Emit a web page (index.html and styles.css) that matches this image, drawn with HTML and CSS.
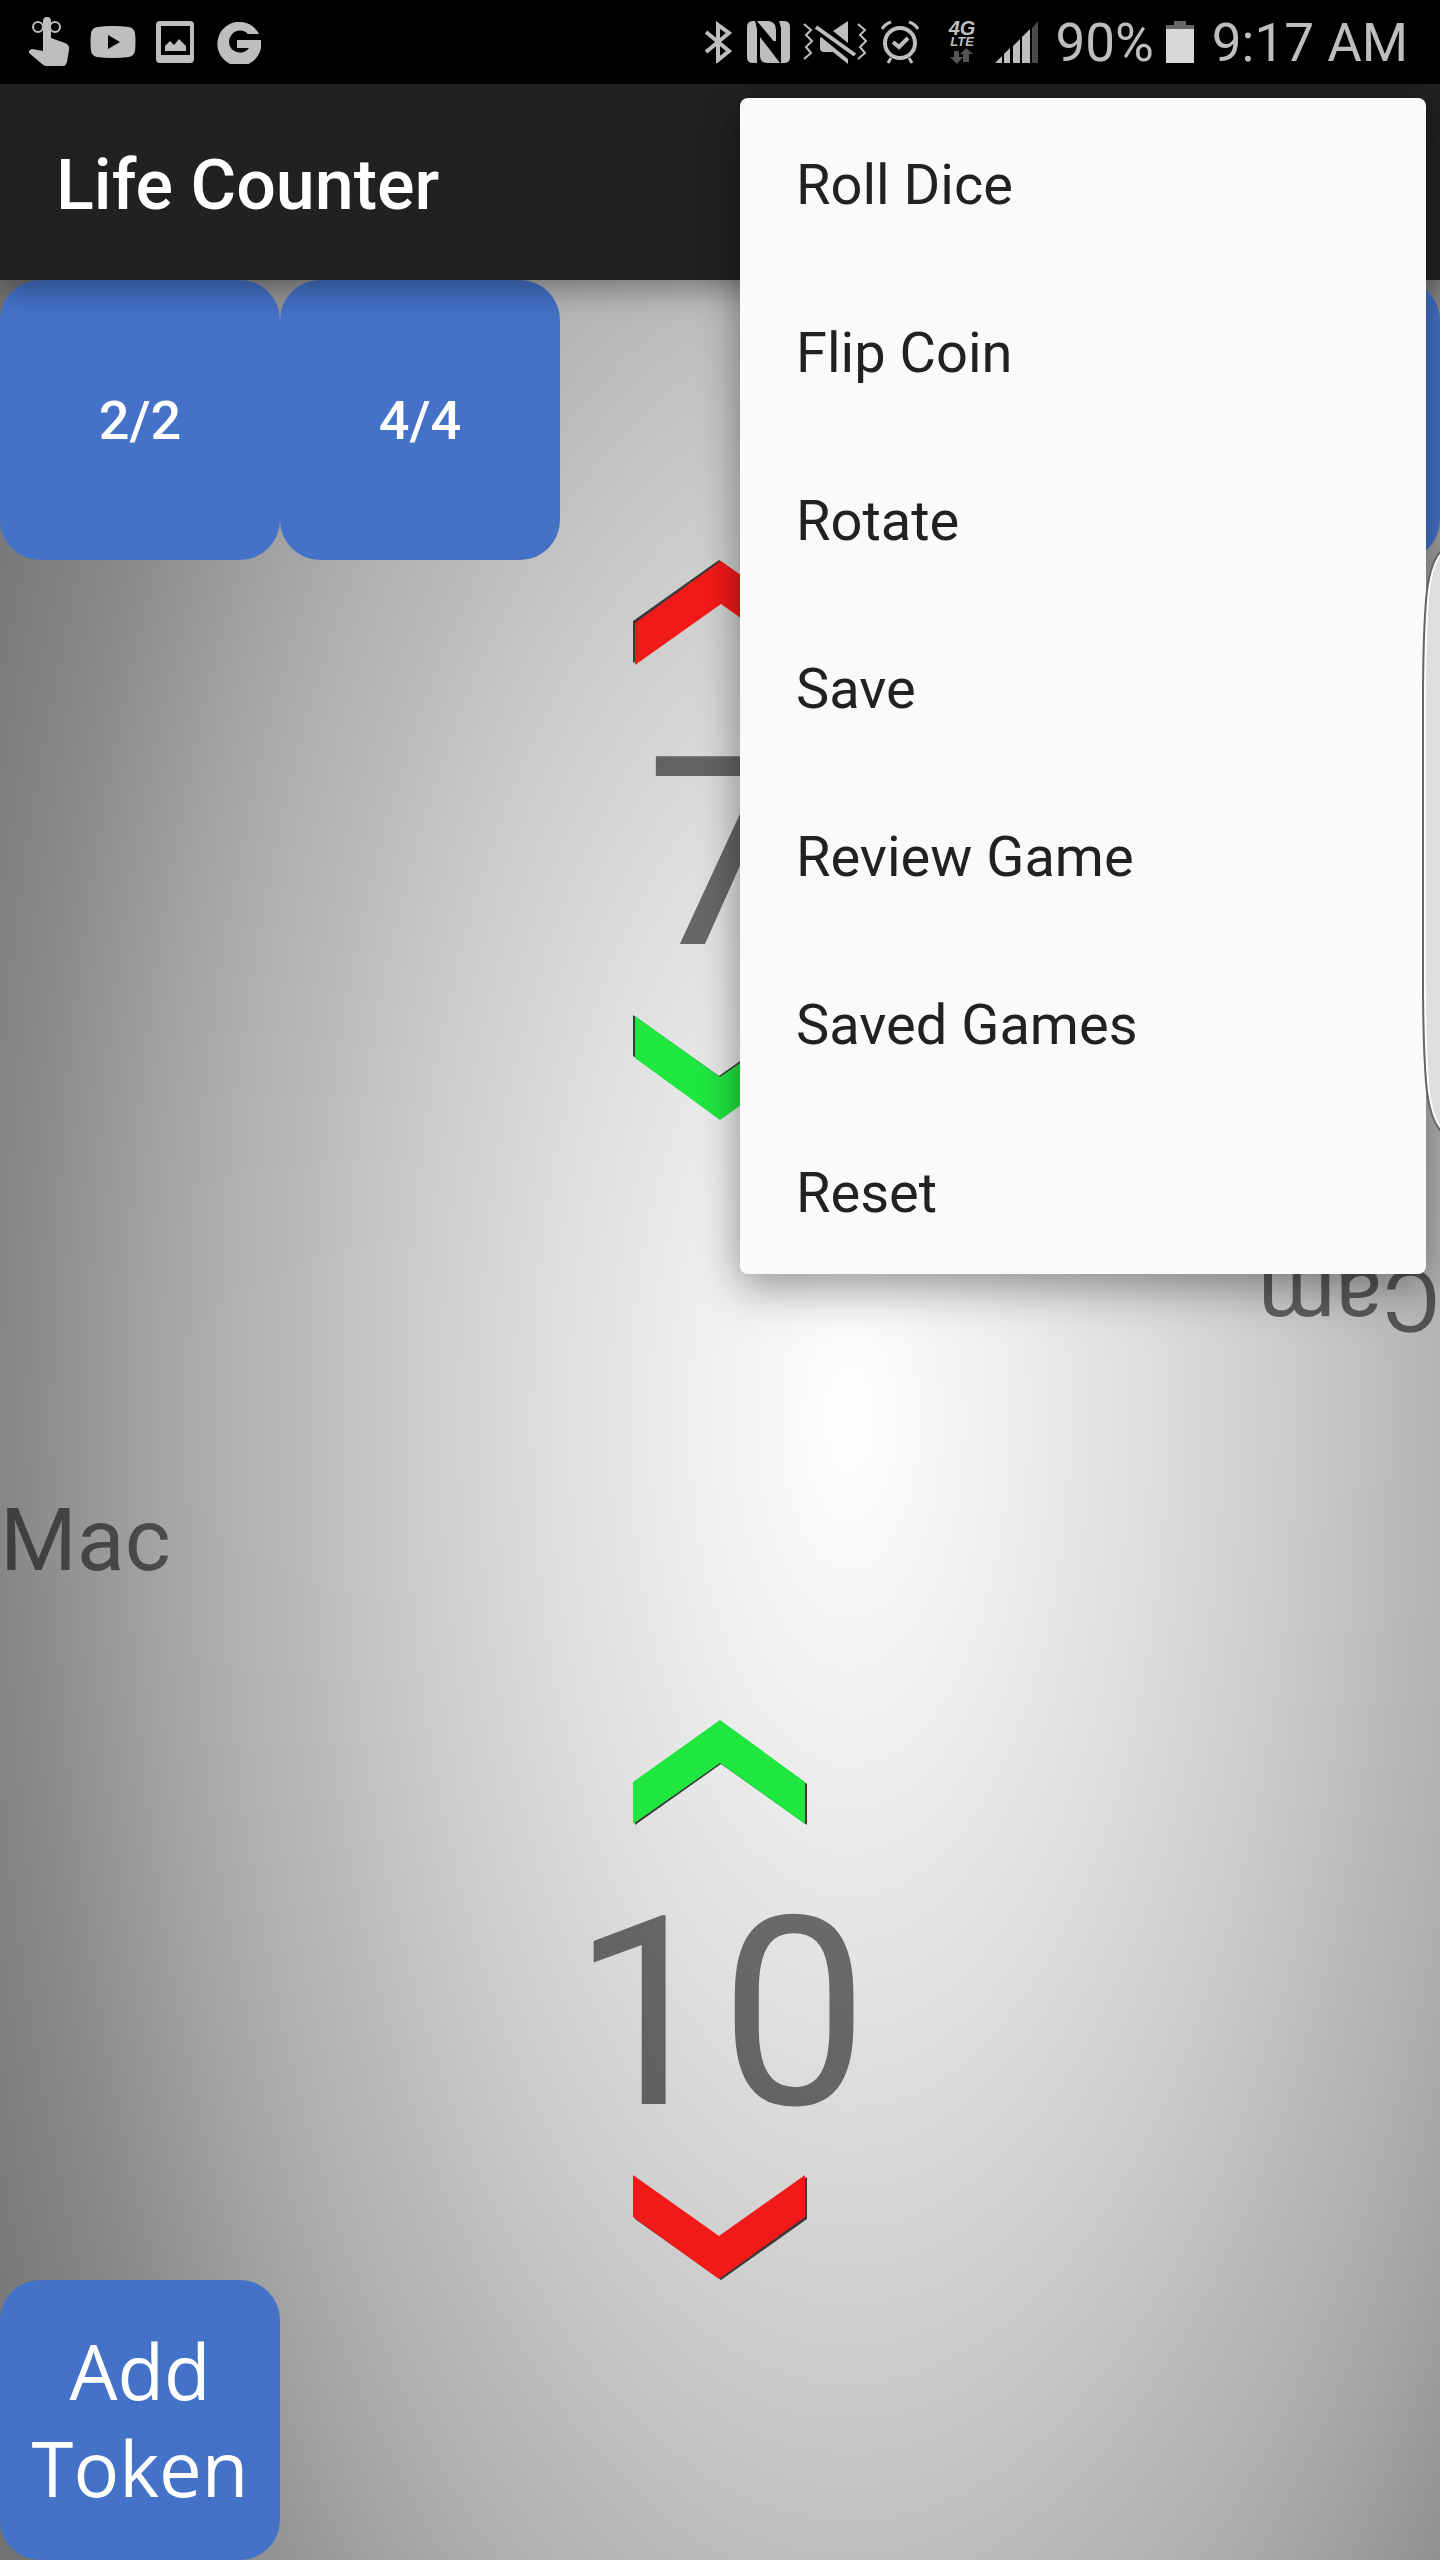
FILE: index.html
```html
<!DOCTYPE html>
<html lang="en">
<head>
<meta charset="utf-8">
<meta name="viewport" content="width=device-width, initial-scale=1">
<title>Life Counter</title>
<link rel="stylesheet" href="styles.css">
</head>
<body>
<div class="status">
  <div class="status-left">
    <svg width="42" height="50" viewBox="0 0 42 50" fill="currentColor" aria-hidden="true"><path d="M15 24V4a4 4 0 0 1 8 0v17l14 5q5 2 4 7l-2 12q-1 4-4 4H18q-2 0-4-2L1 36q-1-3 3-4l11 2z"/><circle cx="10" cy="10" r="5" fill="none" stroke="currentColor" stroke-width="2"/><circle cx="27" cy="10" r="5" fill="none" stroke="currentColor" stroke-width="2"/></svg>
    <svg width="46" height="32" viewBox="0 0 46 32" fill="currentColor" aria-hidden="true"><path fill-rule="evenodd" d="M7 1Q23-1 39 1q5 1 6 6 1 9 0 18-1 5-6 6-16 2-32 0-5-1-6-6Q0 16 1 7 2 2 7 1zm11 8v14l12-7z"/></svg>
    <svg class="i-image" width="38" height="42" viewBox="0 0 38 42" fill="currentColor" aria-hidden="true"><path fill-rule="evenodd" d="M4 0h30q4 0 4 4v34q0 4-4 4H4q-4 0-4-4V4q0-4 4-4zm1 5v29h29V5z"/><path d="M9 30v-5l5-5 4 4 5-6 7 7v5z"/></svg>
    <svg width="44" height="44" viewBox="0 0 44 44" fill="currentColor" aria-hidden="true"><path d="M42 14A22 22 0 1 0 44 20H20v8h12a11 11 0 1 1-1-14z"/></svg>
  </div>
  <div class="status-right">
    <svg class="i-bt" width="28" height="42" viewBox="0 0 28 42" fill="none" stroke="currentColor" stroke-width="4" aria-hidden="true"><path d="M2 11l23 19-11 9V4l11 8L2 31"/></svg>
    <svg class="i-nfc" width="44" height="44" viewBox="0 0 44 44" fill="currentColor" aria-hidden="true"><path d="M6 1h2l2 8v34H6q-6 0-6-6V7q0-6 6-6zM10 1h12q7 1 7 9v14zM32 1h5q6 0 6 6v30q0 6-6 6h-3V8zM13 17l20 26H20q-7 0-7-8z"/><path d="M15 17l13 14V21" fill="none" stroke="#000" stroke-width="2"/></svg>
    <svg class="i-mute" width="64" height="44" viewBox="0 0 64 44" fill="currentColor" aria-hidden="true"><path d="M18 17l27 22v5L30 32H21q-4 0-4-4V18zM30 11L45 1v22z"/><path d="M13 7l39 28" stroke="currentColor" stroke-width="4"/><path d="M1 4l7 6-5 5 6 6-6 6 5 6-7 6M55 4l7 6-5 5 6 6-6 6 5 6-7 6" fill="none" stroke="currentColor" stroke-width="2"/></svg>
    <svg class="i-alarm" width="38" height="44" viewBox="0 0 38 44" fill="none" stroke="currentColor" stroke-width="4" aria-hidden="true"><circle cx="19" cy="23" r="15"/><path d="M12 22l6 5 9-9"/><path d="M1 9q3-5 9-7M37 9q-3-5-9-7M10 38l-3 5M28 38l3 5" stroke-width="3"/></svg>
    <div class="lte"><span>4G</span><small>LTE</small><svg width="24" height="16" viewBox="0 0 24 16" fill="#555" aria-hidden="true"><path d="M4 3h5v6h4l-6 7-7-7h4zM13 14h6V6h4L16 0l-6 6h3z"/></svg></div>
    <svg class="i-signal" width="44" height="44" viewBox="0 0 44 44" aria-hidden="true"><path fill="currentColor" d="M0 43l7-7v7zM9 43V34l6-6v15zM18 43V26l7-7v24zM27 43V17l8-8v34z"/><path fill="#4a4a4a" d="M37 43V8l6-7v42z"/></svg>
    <span class="pct">90%</span>
    <svg class="i-batt" width="28" height="42" viewBox="0 0 28 42" aria-hidden="true"><path fill="#666" d="M8 0h12v4h8v4H0V4h8z"/><path fill="#d8d8d8" d="M0 8h28v34H0z"/></svg>
    <time class="clock">9:17 AM</time>
  </div>
</div>

<header class="appbar"><h1>Life Counter</h1></header>

<main class="game">
  <section class="player" aria-label="Cam">
    <div class="tokens">
      <button class="token">2/2</button>
      <button class="token">4/4</button>
      <button class="token token-add flipped" aria-label="Add Token">Add<br>Token</button>
    </div>
    <div class="counter">
      <button class="arrow flipped" aria-label="Decrease"><svg width="176" height="105" viewBox="0 0 176 105" aria-hidden="true"><path class="edge" d="M2 2L89 64 175 2V44L89 105 3 44z"/><path class="down" d="M1 0L87 61 173 0V42L87 104 1 42z"/></svg></button>
      <output class="life">7</output>
      <button class="arrow flipped" aria-label="Increase"><svg width="176" height="105" viewBox="0 0 176 105" aria-hidden="true"><path class="edge" d="M3 105L89 44 175 105V64L89 2 3 64z"/><path class="up" d="M1 104L88 43 173 104V62L88 0 1 62z"/></svg></button>
    </div>
    <div class="name"><span class="flipped">Cam</span></div>
  </section>
  <section class="player player-near" aria-label="Mac">
    <div class="name"><span>Mac</span></div>
    <div class="counter">
      <button class="arrow" aria-label="Increase"><svg width="176" height="105" viewBox="0 0 176 105" aria-hidden="true"><path class="edge" d="M3 105L89 44 175 105V64L89 2 3 64z"/><path class="up" d="M1 104L88 43 173 104V62L88 0 1 62z"/></svg></button>
      <output class="life">10</output>
      <button class="arrow" aria-label="Decrease"><svg width="176" height="105" viewBox="0 0 176 105" aria-hidden="true"><path class="edge" d="M2 2L89 64 175 2V44L89 105 3 44z"/><path class="down" d="M1 0L87 61 173 0V42L87 104 1 42z"/></svg></button>
    </div>
    <div class="tokens">
      <button class="token token-add">Add<br>Token</button>
    </div>
  </section>
</main>

<div class="menu" role="menu">
  <button role="menuitem">Roll Dice</button>
  <button role="menuitem">Flip Coin</button>
  <button role="menuitem">Rotate</button>
  <button role="menuitem">Save</button>
  <button role="menuitem">Review Game</button>
  <button role="menuitem">Saved Games</button>
  <button role="menuitem">Reset</button>
</div>
<svg class="edge-handle" width="18" height="582" viewBox="0 0 18 582" aria-hidden="true"><path d="M19 2Q7 14 4 50 1 90 1 150V432q0 60 3 100 3 36 15 48z" fill="#dedede"/><path d="M19 4Q9 14 6 50 3 90 3 150V432q0 60 3 100 3 36 13 46" fill="none" stroke="#fff" stroke-width="2"/><path d="M19 1Q7 14 4 50 1 90 1 150V432q0 60 3 100 3 36 15 49" fill="none" stroke="#666" stroke-width="2"/></svg>
</body>
</html>
```
FILE: styles.css
```css
* { box-sizing: border-box; }

body {
  position: relative;
  display: flex;
  flex-direction: column;
  min-height: 100vh;
  margin: 0;
  overflow-x: hidden;
  font-family: Roboto, sans-serif;
  background: #000;
}

button {
  margin: 0;
  padding: 0;
  border: 0;
  background: none;
  color: inherit;
  font: inherit;
}

svg { display: block; flex: none; }

.flipped { transform: rotate(180deg); }

/* Status bar */
.status {
  display: flex;
  justify-content: space-between;
  align-items: center;
  height: 84px;
  padding: 0 32px 0 28px;
  background: #000;
  color: #bebebe;
}
.status-left { display: flex; align-items: center; gap: 20px; }
.i-image { margin-right: 3px; }
.status-right { display: flex; align-items: center; font-size: 53px; line-height: 64px; }
.i-nfc { margin-left: 15px; }
.i-mute { margin-left: 12px; }
.i-alarm { margin-left: 14px; }
.i-signal { margin-left: 20px; }
.pct { margin-left: 16px; padding-top: 2px; }
.i-batt { margin-left: 12px; }
.clock { margin-left: 18px; padding-top: 2px; }
.lte {
  display: flex;
  flex-direction: column;
  align-items: center;
  margin-left: 30px;
  font: italic 700 20px/15px "Liberation Sans", sans-serif;
}
.lte small { font-size: 13px; line-height: 12px; }

/* App bar */
.appbar {
  position: relative;
  display: flex;
  align-items: center;
  height: 196px;
  padding: 6px 56px 0;
  background: #212121;
  color: #fff;
  box-shadow: 0 10px 28px rgba(0, 0, 0, .35);
}
.appbar h1 { margin: 0; font-size: 70px; font-weight: 500; line-height: 84px; }

/* Board */
.game {
  flex: 1;
  display: flex;
  flex-direction: column;
  background: radial-gradient(ellipse 900px 1950px at 59% 50%, #fff 0%, #eee 18%, #dedede 33%, #cacaca 50%, #a9a9a9 74%, #868686 94%, #6c6c6c 115%);
}
.player { flex: 1; display: flex; flex-direction: column; }
.tokens { display: flex; }
.player-near .tokens { margin-top: auto; }
.token {
  width: 280px;
  height: 280px;
  border-radius: 40px;
  background: #4472c8;
  color: #fff;
  font-size: 54px;
  font-weight: 500;
}
.token-add { padding-bottom: 2px; font: 400 76px/97px "Open Sans", sans-serif; }
.tokens .token-add.flipped { margin-left: auto; }

.counter { display: flex; flex-direction: column; align-items: center; }
.life {
  padding-top: 28px;
  font-size: 264px;
  line-height: 322px;
  color: rgba(0, 0, 0, .54);
}
.up { fill: #20e640; }
.down { fill: #f21a18; }
.edge { fill: #3a3a3a; }

.name {
  display: flex;
  align-items: flex-start;
  height: 300px;
  padding-top: 68px;
  font-size: 88px;
  line-height: 104px;
  color: rgba(0, 0, 0, .54);
}
.player:first-child .name {
  justify-content: flex-end;
  align-items: flex-end;
  padding: 0 0 68px;
}

/* Overflow menu */
.menu {
  position: absolute;
  top: 98px;
  right: 14px;
  display: flex;
  flex-direction: column;
  width: 686px;
  border-radius: 8px;
  background: #fafafa;
  box-shadow: 0 20px 44px rgba(0, 0, 0, .25), 0 0 36px rgba(0, 0, 0, .2);
}
.menu button {
  height: 168px;
  padding: 6px 56px 0;
  color: #212121;
  font-size: 56px;
  line-height: 66px;
  text-align: left;
}

.edge-handle { position: absolute; top: 550px; right: 0; }
```
